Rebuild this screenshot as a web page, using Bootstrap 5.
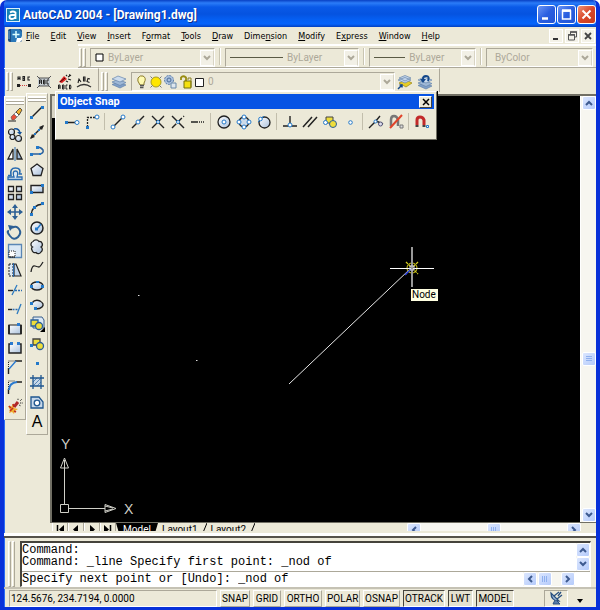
<!DOCTYPE html>
<html lang="en">
<head>
<meta charset="utf-8">
<meta name="viewport" content="width=device-width, initial-scale=1">
<title>AutoCAD 2004 - [Drawing1.dwg]</title>
<link href="https://cdn.jsdelivr.net/npm/bootstrap@5.3.0/dist/css/bootstrap.min.css" rel="stylesheet">
<style>
  :root { --face:#ece9d8; --shade:#aca899; --ui:"DejaVu Sans Condensed","Noto Sans",sans-serif; --rb:Roboto,"Liberation Sans",sans-serif; }
  body { background:#fff; font:9px/12px var(--ui); color:#000; }
  button, select, input { font:inherit; color:inherit; border:0; padding:0; margin:0; background:none; }
  svg { display:block; flex:none; }
  .app { height:100vh; min-height:560px; background:var(--face); border:solid #0831d9; border-width:0 4px 3px; border-radius:7px 7px 0 0; overflow:hidden; box-shadow:inset 1px 0 #2a6cf5; }
  .titlebar { height:27px; margin:0 -4px; padding:2px 4px 0 6px; background:linear-gradient(#0840c4 0,#2b7cf8 3px,#0a5ae8 7px,#0553e0 14px,#0560f4 20px,#0664fb 24px,#0340c0 27px); }
  .titlebar h1 { font:bold 12px/16px var(--rb); color:#fff; text-shadow:1px 1px #0a2f8f; margin:1px 0 0 3px; }
  .winbtns { gap:1px; }
  .winbtn { width:19px; height:19px; border:1px solid #fff; border-radius:3px; background:linear-gradient(135deg,#6d96f5,#2a5fe0 50%,#2255d6); }
  .winbtn.close-app { background:linear-gradient(135deg,#ee9478,#d9482a 50%,#c93c1c); }
  .menubar { height:17px; padding:0 1px 0 4px; }
  .menubar a { color:#000; text-decoration:none; margin-right:11px; }
  .menubar u { text-underline-offset:1px; }
  .mdis { gap:2px; }
  .mdi { width:14px; height:14px; background:#f4f2e8; border:1px solid #fff; }
  .bar { border-top:1px solid #fff; border-bottom:1px solid var(--shade); }
  .props { height:24px; margin-left:74px; padding:2px 3px 0 0; border-top-width:2px; gap:3px; }
  .grip { width:3px; background:var(--face); border:1px solid; border-color:#fff var(--shade) var(--shade) #fff; flex:none; }
  .grips { display:flex; gap:1px; height:19px; padding:0 1px; }
  .combo { height:19px; border:1px solid; border-color:var(--shade) #fff #fff var(--shade); color:#aca899; font:10px/14px var(--rb); min-width:0; }
  .combo select { appearance:none; opacity:1; color:#aca899; min-width:0; flex:1 1 0; width:0; }
  .drop { width:14px; height:16px; background:#f2f0e6; border:1px solid #fff; border-right-color:#d8d4c4; flex:none; display:flex; align-items:center; justify-content:center; }
  .div-v { width:2px; height:17px; border-left:1px solid #c9c5b2; border-right:1px solid #fff; }
  .c-a { flex:130 1 0; } .c-b { flex:140 1 0; } .c-c { flex:110 1 0; } .c-d { flex:106 1 0; }
  .row3 { height:26px; }
  .row3 > div { border-right:1px solid var(--shade); border-top:1px solid #fff; height:24px; padding:2px 4px 0 1px; }
  .tool { display:flex; align-items:center; justify-content:center; width:20px; height:18px; flex:none; }
  .tool svg { overflow:visible; }
  .layer-btn { margin-right:2px; }
  .layers { width:264px; }
  .dock { display:flex; flex-direction:column; align-items:center; justify-content:space-between; width:22px; border:1px solid; border-color:#fff var(--shade) var(--shade) #fff; padding:2px 0 4px; }
  .dock .tool { height:18px; }
  .dock .grip-h { width:18px; height:6px; border-top:2px solid #fff; border-bottom:1px solid var(--shade); box-shadow:inset 0 1px var(--shade),inset 0 -2px #fff; flex:none; }
  .docks { padding-right:2px; }
  .dock-modify { height:324px; margin-top:2px; }
  .dock-draw { height:342px; margin-top:-1px; }
  .view { background:#000; border-left:2px solid #716f64; min-width:0; }
  .canvas-svg { position:absolute; inset:0; width:100%; height:100%; }
  .ucs { position:absolute; left:6px; bottom:4px; }
  .snap-tip { position:absolute; left:358px; top:192px; background:#ffffe1; border:1px solid #000; font:10px/12px var(--rb); padding:0 2px 0 1px; }
  .sb { background:#f7f6f0; flex:none; display:flex; }
  .sbb { width:14px; height:14px; border:1px solid #fff; border-radius:2px; background:linear-gradient(135deg,#dbe6fe,#b5cbfb); display:flex; align-items:center; justify-content:center; flex:none; color:#3d5a90; }
  .vs { width:16px; flex-direction:column; align-items:center; border-left:1px solid #fff; }
  .track-a { flex:63 1 0; } .track-b { flex:37 1 0; }
  .hs { width:32%; margin-right:15px; }
  .edge { border-top:2px solid #716f64; }
  .tabs { height:9px; border-top:1px solid #716f64; overflow:hidden; align-items:flex-start; padding-left:2px; }
  .tabs button { line-height:12px; font-family:var(--rb); font-size:10px; }
  .tabs > button { height:14px; padding-top:0; }
  .tabs .nv { width:16px; border-right:1px solid var(--shade); border-left:1px solid #fff; display:flex; justify-content:center; padding-top:2px; }
  .tabs .model { background:#000; color:#fff; width:42px; clip-path:polygon(0 0,100% 0,90% 100%,10% 100%); }
  .command { margin-top:5px; border-top:2px solid #55524a; padding:3px 5px 0 3px; box-shadow:0 -3px #fff; }
  .cmdbox { border:1px solid #fff; border-top:2px solid #45433c; border-left:2px solid #45433c; background:#fff; font:12px/12px "Liberation Mono",monospace; }
  .cmdbox pre { font:inherit; margin:0; padding:1px 0 2px; overflow:hidden; line-height:12px; height:27px; }
  .cmdline { border-top:1px solid var(--shade); height:15px; }
  .cmdline label, .cmdline input { line-height:14px; }
  .cmdscroll { margin-right:15px; gap:1px; }
  .status { height:20px; border-top:2px solid #c5c2b4; padding:0 4px 0 5px; font:10px/15px var(--rb); gap:3px; }
  .coords { width:208px; height:17px; border:1px solid; border-color:var(--shade) #fff #fff var(--shade); padding-left:1px; }
  .st { height:17px; border:1px solid; border-color:#fff var(--shade) var(--shade) #fff; padding:0 1px; line-height:15px; text-align:center; white-space:nowrap; }
  .st.on { border-color:#45433c #fff #fff #45433c; background:#e4e1d0; }
  .w1 { width:30px; } .w2 { width:28px; } .w3 { width:38px; } .w4 { width:35px; } .w5 { width:37px; } .w6 { width:42px; } .w7 { width:25px; } .w8 { width:38px; }
  /* floating toolbar over the drawing */
  .osnap { position:absolute; left:51px; top:91px; width:382px; background:var(--face); border:1px solid; border-color:#fff #716f64 #716f64 #fff; box-shadow:1px 0 #000; padding:2px; z-index:5; }
  .osnap h2 { font:bold 11px/14px var(--rb); color:#fff; margin:0; }
  .cap { background:#0653e4; height:15px; padding:0 2px; }
  .cap button { width:13px; height:12px; background:var(--face); border:1px solid; border-color:#fff #45433c #45433c #fff; display:flex; align-items:center; justify-content:center; }
  .otools { padding:2px 0 5px 4px; height:28px; align-items:center; }
  .osep { width:6px; height:17px; flex:none; background:linear-gradient(90deg,transparent 2px,#c2beac 2px,#c2beac 3px,transparent 3px); }
</style>
<script src="https://cdn.jsdelivr.net/npm/bootstrap@5.3.0/dist/js/bootstrap.bundle.min.js"></script>
</head>
<body>
<svg width="0" height="0" class="position-absolute" aria-hidden="true">
  <defs>
    <symbol id="down" viewBox="0 0 8 6"><path d="M1 1l3 3 3-3" fill="none" stroke="currentColor" stroke-width="2"/></symbol>
    <symbol id="up" viewBox="0 0 8 6"><path d="M1 5l3-3 3 3" fill="none" stroke="currentColor" stroke-width="2"/></symbol>
    <symbol id="lt" viewBox="0 0 6 8"><path d="M5 1L2 4l3 3" fill="none" stroke="currentColor" stroke-width="2"/></symbol>
    <symbol id="rt" viewBox="0 0 6 8"><path d="M1 1l3 3-3 3" fill="none" stroke="currentColor" stroke-width="2"/></symbol>
    <symbol id="stack" viewBox="0 0 16 16"><g stroke="#6484ab" stroke-width=".7"><path d="M1 10.500l6-2.500 8 3-6 3z" fill="#7f9fc8"/><path d="M1 8l6-2.500 8 3-6 3z" fill="#9fb8d6"/><path d="M1 5l6-3 8 3-6 3z" fill="#cbdbed"/></g></symbol>
    <linearGradient id="ball" x1="0" y1="0" x2="1" y2="1"><stop offset="0" stop-color="#fff"/><stop offset="1" stop-color="#a9c0dc"/></linearGradient>
  </defs>
</svg>

<div class="app d-flex flex-column position-relative">
  <header class="titlebar d-flex align-items-center flex-shrink-0">
    <svg width="14" height="14" viewBox="0 0 14 14"><rect x=".5" y=".5" width="13" height="13" fill="#1782b4" stroke="#d9f0fa"/><path d="M4 4.500Q7 2.500 9.500 4.500V11M9.500 7H6Q3.500 7 3.500 9T6 11Q8 11 9.500 9" fill="none" stroke="#fff" stroke-width="1.800"/></svg>
    <h1 class="flex-grow-1">AutoCAD 2004 - [Drawing1.dwg]</h1>
    <div class="winbtns d-flex">
      <button class="winbtn" aria-label="Minimize"><svg width="17" height="17" viewBox="0 0 17 17"><path d="M4 12.500h6" stroke="#fff" stroke-width="2.500"/></svg></button>
      <button class="winbtn" aria-label="Maximize"><svg width="17" height="17" viewBox="0 0 17 17"><path d="M4.500 5v8h8V5z" fill="none" stroke="#fff" stroke-width="1.500"/><path d="M4 4.500h9" stroke="#fff" stroke-width="2.500"/></svg></button>
      <button class="winbtn close-app" aria-label="Close"><svg width="17" height="17" viewBox="0 0 17 17"><path d="M4.500 4.500l8 8M12.500 4.500l-8 8" stroke="#fff" stroke-width="2"/></svg></button>
    </div>
  </header>

  <nav class="menubar d-flex align-items-center flex-shrink-0" aria-label="Menu">
    <svg class="me-1" width="14" height="13" viewBox="0 0 14 13"><rect width="14" height="13" rx="2" fill="#1a4d86"/><path d="M3 0h8l3 3v6l-4 4H3z" fill="#2a78b8"/><path d="M8 2v7M4.500 5.500h7" stroke="#dff" stroke-width="1.500"/><path d="M8 13l1-4h4l1-2v4l-2 2z" fill="#fff"/><path d="M1 2v8" stroke="#6fa9d8"/></svg>
    <a href="#"><u>F</u>ile</a><a href="#"><u>E</u>dit</a><a href="#"><u>V</u>iew</a><a href="#"><u>I</u>nsert</a><a href="#">F<u>o</u>rmat</a><a href="#"><u>T</u>ools</a><a href="#"><u>D</u>raw</a><a href="#">Dime<u>n</u>sion</a><a href="#"><u>M</u>odify</a><a href="#">E<u>x</u>press</a><a href="#"><u>W</u>indow</a><a href="#"><u>H</u>elp</a>
    <div class="mdis d-flex ms-auto">
      <button class="mdi" aria-label="Minimize drawing"><svg width="12" height="12" viewBox="0 0 12 12"><path d="M3 9h5" stroke="#333" stroke-width="2"/></svg></button>
      <button class="mdi" aria-label="Restore drawing"><svg width="12" height="12" viewBox="0 0 12 12"><path d="M4.500 4V2h6v5h-2M2.500 4.500h6V10h-6z" fill="none" stroke="#555"/><path d="M4 2h7M2 5h7" stroke="#555" stroke-width="1.500"/></svg></button>
      <button class="mdi" aria-label="Close drawing"><svg width="12" height="12" viewBox="0 0 12 12"><path d="M3 3l6 6M9 3l-6 6" stroke="#444" stroke-width="1.800"/></svg></button>
    </div>
  </nav>

  <div class="props bar d-flex flex-shrink-0">
    <div class="grips"><span class="grip"></span><span class="grip"></span></div>
    <div class="d-flex flex-grow-1 gap-1">
      <div class="combo c-a d-flex align-items-center ps-1"><svg class="me-1" width="9" height="9"><path d="M1 1h7v7H1z" fill="#fff" stroke="#000"/></svg><select disabled aria-label="Color"><option>ByLayer</option></select><span class="drop"><svg width="8" height="6"><use href="#down"/></svg></span></div>
      <span class="div-v"></span>
      <div class="combo c-b d-flex align-items-center ps-1"><svg class="me-1" width="53" height="3"><path d="M0 1.500h53" stroke="#5a5a44"/></svg><select disabled aria-label="Linetype"><option>ByLayer</option></select><span class="drop"><svg width="8" height="6"><use href="#down"/></svg></span></div>
      <span class="div-v"></span>
      <div class="combo c-c d-flex align-items-center ps-1"><svg class="me-1" width="31" height="3"><path d="M0 1.500h31" stroke="#5a5a44"/></svg><select disabled aria-label="Lineweight"><option>ByLayer</option></select><span class="drop"><svg width="8" height="6"><use href="#down"/></svg></span></div>
      <span class="div-v"></span>
      <div class="combo c-d d-flex align-items-center ps-2"><select disabled aria-label="Plot style"><option>ByColor</option></select><span class="drop"><svg width="8" height="6"><use href="#down"/></svg></span></div>
    </div>
  </div>

  <div class="row3 d-flex align-items-start flex-shrink-0">
    <div class="d-flex align-items-center">
      <div class="grips"><span class="grip"></span><span class="grip"></span></div>
      <button class="tool" aria-label="Text fit"><svg width="16" height="16" viewBox="0 0 16 16"><path d="M2 6V3h2v3M2 4.500h2M7 2.500h1.500v4H7zM7 4.500h2M14 3h-2v3h2" fill="none" stroke="#222" stroke-width="1.100"/><path d="M4 11.500h8" stroke="#c44" stroke-dasharray="1 1"/><path d="M1 10h3v3H1zM12 10h3v3h-3z" fill="#222"/></svg></button>
      <button class="tool" aria-label="Text mask"><svg width="16" height="16" viewBox="0 0 16 16"><path d="M2 4h12v8H2z" fill="#c9d0d4"/><path d="M1 2l3 3M15 2l-3 3M1 14l3-3M15 14l-3-3M3 4h10M3 12h10" stroke="#555"/><path d="M3.500 10V6h2v4M3.500 8h2M7.500 6h1.500v4H7.500zM7.500 8H9M13 6h-2v4h2" fill="none" stroke="#222"/></svg></button>
      <button class="tool" aria-label="Explode text"><svg width="16" height="16" viewBox="0 0 16 16"><path d="M3 8l5-6 3 3-5 4z" fill="#d22"/><path d="M4 8l5-4" stroke="#400"/><path d="M10 2l1-1M12 3l3-2M12 5l3 1M10 7l2 1M13 1h1" stroke="#222" stroke-width="1.300"/><path d="M2.500 15v-4h1.500v4M2.500 13h2M6.500 11h1.500v4H6.500zM6.500 13H8M11.500 11H10v4h1.500M13.500 11h1l.5 2-.5 2h-1z" fill="none" stroke="#222"/></svg></button>
      <button class="tool" aria-label="Arc-aligned text"><svg width="16" height="16" viewBox="0 0 16 16"><path d="M1 13q7-5 14 0" fill="none" stroke="#333" stroke-width="1.300"/><path d="M2 9l1-4 2 3M2 7l2-1M7.500 3H9v4H7.500zM7.500 5H9M14 5l-2-.5-1 3 2.500 1" fill="none" stroke="#222" stroke-width="1.100"/></svg></button>
    </div>
    <div class="d-flex align-items-center">
      <div class="grips"><span class="grip"></span><span class="grip"></span></div>
      <button class="tool layer-btn" aria-label="Layer properties"><svg width="16" height="16"><use href="#stack"/></svg></button>
      <div class="combo layers d-flex align-items-center ps-1">
        <svg width="72" height="16" viewBox="0 0 72 16"><path d="M3.500 10Q1 7 2 4q2-3 5-2 4 2 1 7v2H4z" fill="#fffbb0" stroke="#8a7a2a"/><path d="M4 11.500h4M4 13.500h3.500" stroke="#555" stroke-width="1.300"/><circle cx="20" cy="8" r="5" fill="#ffe600" stroke="#a99b20"/><path d="M14.500 2.500l2 2M23.500 4.500l2-2M14.500 13.500l2-2M23.500 11.500l2 2" stroke="#777"/><circle cx="33" cy="6" r="4.500" fill="#a9bfdc" stroke="#5a7ca8" stroke-dasharray="2 1"/><circle cx="33" cy="6" r="2" fill="none" stroke="#4a6c98"/><path d="M35 9h5v5h-5z" fill="#dde6ee" stroke="#6888a8"/><path d="M45 6V3.500Q47 1 50 3.500V8" fill="none" stroke="#998c10" stroke-width="1.800"/><path d="M48 7h7v7h-7z" fill="#f4e010" stroke="#75700d"/><path d="M52 6V4h3v9" fill="none" stroke="#8a8020"/><path d="M59.500 4.500h8v8h-8z" fill="#fff" stroke="#222"/></svg>
        <select disabled aria-label="Layer"><option>0</option></select><span class="drop"><svg width="8" height="6"><use href="#down"/></svg></span>
      </div>
      <button class="tool" aria-label="Make object's layer current"><svg width="16" height="16" viewBox="0 0 16 16"><path d="M2 9l7-3 6 3-6 4z" fill="#e6cd25" stroke="#9a8414" stroke-width=".7"/><path d="M1 6l7-2.500L14 6 8 9zM2 4l6-2.500L14 4 8 7z" fill="#c4d5ea" stroke="#6484ab" stroke-width=".7"/><path d="M1 15l4-4M2.500 11H5v2.500" fill="none" stroke="#14478a" stroke-width="1.500"/></svg></button>
      <button class="tool" aria-label="Layer previous"><svg width="16" height="16" viewBox="0 0 16 16"><use href="#stack" width="16" height="16" y="1"/><path d="M11 7Q13 2 9 2 6 2 6 5" fill="none" stroke="#14478a" stroke-width="2"/><path d="M3 5h6L6 9z" fill="#14478a"/></svg></button>
    </div>
  </div>

  <main class="d-flex flex-grow-1">
    <div class="docks d-flex align-items-start flex-shrink-0">
      <div class="dock dock-modify" role="toolbar" aria-label="Modify">
        <span class="grip-h"></span>
        <button class="tool" aria-label="Erase"><svg width="16" height="16" viewBox="0 0 16 16"><path d="M1 14h8" stroke="#222"/><path d="M4 10l3-3 3 3-3 3H5z" fill="#e8503a" stroke="#555" stroke-width=".6"/><path d="M7 7l2-2 3 3-2 2z" fill="#fff" stroke="#555" stroke-width=".6"/><path d="M9 5l4-4 2 2-3 5z" fill="#f0b030" stroke="#333" stroke-width=".8"/></svg></button>
        <button class="tool" aria-label="Copy"><svg width="16" height="16" viewBox="0 0 16 16"><g fill="url(#ball)" stroke="#222" stroke-width="1.200"><circle cx="4.500" cy="5" r="3"/><circle cx="5.500" cy="10" r="2.500"/><circle cx="11.500" cy="11.500" r="3"/></g><path d="M7 2q5-1 6 4" fill="none" stroke="#14539c" stroke-width="1.500"/><path d="M10 5h5l-2 3z" fill="#14539c"/></svg></button>
        <button class="tool" aria-label="Mirror"><svg width="16" height="16" viewBox="0 0 16 16"><path d="M6 3v10H1z" fill="#fff" stroke="#222" stroke-width="1.300"/><path d="M10 3v10h5z" fill="#9eb8d6" stroke="#222" stroke-width="1.300"/><path d="M8 1v14" stroke="#2a6bb0"/></svg></button>
        <button class="tool" aria-label="Offset"><svg width="16" height="16" viewBox="0 0 16 16"><path d="M1 9.500h3Q2.500 2 8.500 2T12.500 8H15" fill="none" stroke="#2a6bb0" stroke-width="1.600"/><path d="M1 13.500V11h6Q5 5 8.500 5T10 11h5v2.500z" fill="#dbe8f5" stroke="#2a6bb0" stroke-width="1.300"/></svg></button>
        <button class="tool" aria-label="Array"><svg width="16" height="16" viewBox="0 0 16 16"><g fill="url(#ball)" stroke="#222" stroke-width="1.300"><path d="M1.500 1.500h5v5h-5zM9.500 1.500h5v5h-5zM1.500 9.500h5v5h-5zM9.500 9.500h5v5h-5z"/></g></svg></button>
        <button class="tool" aria-label="Move"><svg width="16" height="16" viewBox="0 0 16 16"><path d="M8 2v12M2 8h12" stroke="#2c5f94" stroke-width="1.600"/><path d="M8 0l3 4H5zM8 16l3-4H5zM0 8l4-3v6zM16 8l-4-3v6z" fill="#2c5f94"/></svg></button>
        <button class="tool" aria-label="Rotate"><svg width="16" height="16" viewBox="0 0 16 16"><path d="M5 4Q9 1 12 5t-1 8-8-1-1-5" fill="none" stroke="#2c5f94" stroke-width="2"/><path d="M1 1l6 1-4 5z" fill="#2c5f94"/></svg></button>
        <button class="tool" aria-label="Scale"><svg width="16" height="16" viewBox="0 0 16 16"><path d="M1.500 1.500h13v13h-13z" fill="#dbe8f5" stroke="#5a86b5" stroke-width="1.300"/><path d="M2 8h6v6H2z" fill="#fff" stroke="#222" stroke-dasharray="1 1"/><path d="M2 14h6" stroke="#222"/></svg></button>
        <button class="tool" aria-label="Stretch"><svg width="16" height="16" viewBox="0 0 16 16"><path d="M2 2h4v12H2z" fill="#dbe8f5" stroke="#222" stroke-dasharray="2 1"/><path d="M7 2h2l5 12H7z" fill="#c4d6ea" stroke="#222" stroke-width="1.200"/><path d="M6.500 1v14" stroke="#2a6bb0"/></svg></button>
        <button class="tool" aria-label="Trim"><svg width="16" height="16" viewBox="0 0 16 16"><path d="M1 8.500h5" stroke="#222" stroke-width="1.400"/><path d="M8 8.500h7" stroke="#2a6bb0" stroke-width="1.400" stroke-dasharray="2 1"/><path d="M5 13l5-10" stroke="#2a7ac0" stroke-width="1.300"/></svg></button>
        <button class="tool" aria-label="Extend"><svg width="16" height="16" viewBox="0 0 16 16"><path d="M1 8.500h4" stroke="#222" stroke-width="1.400"/><path d="M5.500 8.500H11" stroke="#2a6bb0" stroke-width="1.400" stroke-dasharray="2 1"/><path d="M10 13l4-10" stroke="#2a7ac0" stroke-width="1.300"/></svg></button>
        <button class="tool" aria-label="Break at point"><svg width="16" height="16" viewBox="0 0 16 16"><path d="M2 4h12v9H2z" fill="url(#ball)" stroke="#222" stroke-width="1.200"/><path d="M2 4v9M14 4v9" stroke="#222" stroke-width="1.800"/><path d="M10 2h3v3h-3z" fill="#2a7ad0"/></svg></button>
        <button class="tool" aria-label="Break"><svg width="16" height="16" viewBox="0 0 16 16"><path d="M4 4H2v9h12V4h-2" fill="url(#ball)" stroke="#222" stroke-width="1.500"/><path d="M3 2h3v3H3zM10 2h3v3h-3z" fill="#2a7ad0"/></svg></button>
        <button class="tool" aria-label="Chamfer"><svg width="16" height="16" viewBox="0 0 16 16"><path d="M1.500 14V2H8" fill="none" stroke="#222" stroke-dasharray="1 1"/><path d="M1.500 9v6M8 2h7" stroke="#222" stroke-width="1.400"/><path d="M2 10l7-8" stroke="#2a7ad0" stroke-width="1.400"/></svg></button>
        <button class="tool" aria-label="Fillet"><svg width="16" height="16" viewBox="0 0 16 16"><path d="M1.500 14V2H8" fill="none" stroke="#222" stroke-dasharray="1 1"/><path d="M1.500 10v5M9 3h6" stroke="#222" stroke-width="1.400"/><path d="M2 11q0-7 8-8" fill="none" stroke="#2a7ad0" stroke-width="2"/></svg></button>
        <button class="tool" aria-label="Explode"><svg width="16" height="16" viewBox="0 0 16 16"><path d="M1 8l3 1 2-3 1 4 4 1-3 2-1 3-2-2-3 1 1-3z" fill="#f0b030"/><path d="M2 8l2 2M3 13l3-3M7 13l2 1M6 6l1 3" stroke="#c2301c" stroke-width="1.700"/><path d="M7 9l4-5" stroke="#b02828" stroke-width="3"/><path d="M11 2V0M13 3l2-2M13 5h3M12 7l2 1" stroke="#333" stroke-dasharray="1 .7"/></svg></button>
      </div>
      <div class="dock dock-draw" role="toolbar" aria-label="Draw">
        <span class="grip-h"></span>
        <button class="tool" aria-label="Line"><svg width="16" height="16" viewBox="0 0 16 16"><path d="M3 13L13 3" stroke="#222" stroke-width="1.400"/><path d="M1 12h3v3H1zM12 2h3v3h-3z" fill="#2379c9"/></svg></button>
        <button class="tool" aria-label="Construction line"><svg width="16" height="16" viewBox="0 0 16 16"><path d="M2 14L14 2" stroke="#222" stroke-width="1.500"/><path d="M1 15l2-5 3 3zM15 1l-5 2 3 3z" fill="#222"/><path d="M5 9h2v2H5zM9 5h2v2H9z" fill="#2379c9"/></svg></button>
        <button class="tool" aria-label="Polyline"><svg width="16" height="16" viewBox="0 0 16 16"><path d="M2 11h9q4-1 3-4-2-3-6-3" fill="none" stroke="#2a5f9a" stroke-width="1.500"/><path d="M1 10h3v3H1zM7 3h3v3H7zM10 10h2v2h-2z" fill="#2379c9"/></svg></button>
        <button class="tool" aria-label="Polygon"><svg width="16" height="16" viewBox="0 0 16 16"><path d="M8 2l6 4.500-2 7H4l-2-7z" fill="url(#ball)" stroke="#222" stroke-width="1.300"/></svg></button>
        <button class="tool" aria-label="Rectangle"><svg width="16" height="16" viewBox="0 0 16 16"><path d="M2 4.500h12v7H2z" fill="url(#ball)" stroke="#222" stroke-width="1.400"/><path d="M1 10h3v3H1zM12 3h3v3h-3z" fill="#2379c9"/></svg></button>
        <button class="tool" aria-label="Arc"><svg width="16" height="16" viewBox="0 0 16 16"><path d="M2 14Q3 4 14 3" fill="none" stroke="#222" stroke-width="1.400"/><path d="M1 12h3v3H1zM4 5h3v3H4zM12 1h3v3h-3z" fill="#2379c9"/></svg></button>
        <button class="tool" aria-label="Circle"><svg width="16" height="16" viewBox="0 0 16 16"><circle cx="8" cy="8" r="6" fill="url(#ball)" stroke="#222" stroke-width="1.500"/><path d="M8 9l4-5" stroke="#2379c9" stroke-width="1.400"/><path d="M6 7.500h3v3H6z" fill="#2379c9"/></svg></button>
        <button class="tool" aria-label="Revision cloud"><svg width="16" height="16" viewBox="0 0 16 16"><path d="M3.500 8A3 3 0 0 1 4 2.500a3.500 3.500 0 0 1 6 0A3 3 0 0 1 12 8a3 3 0 0 1 0 5 3 3 0 0 1-5 .5A3 3 0 0 1 3 11a2 2 0 0 1 .5-3z" fill="url(#ball)" stroke="#222" stroke-width="1.300"/></svg></button>
        <button class="tool" aria-label="Spline"><svg width="16" height="16" viewBox="0 0 16 16"><path d="M2 13q1-7 4-6t4 1 4-5" fill="none" stroke="#222" stroke-width="1.300"/></svg></button>
        <button class="tool" aria-label="Ellipse"><svg width="16" height="16" viewBox="0 0 16 16"><ellipse cx="8" cy="8" rx="6" ry="4" fill="url(#ball)" stroke="#222" stroke-width="1.400"/><path d="M1 7h3v3H1zM12 7h3v3h-3zM7 3h3v2H7z" fill="#2379c9"/></svg></button>
        <button class="tool" aria-label="Ellipse arc"><svg width="16" height="16" viewBox="0 0 16 16"><path d="M3 6q3-4 8-2 5 3 2 6-2 2-6 2" fill="url(#ball)" stroke="#222" stroke-width="1.400"/><path d="M1 5h3v3H1zM5 10h3v3H5z" fill="#2379c9"/></svg></button>
        <button class="tool" aria-label="Insert block"><svg width="16" height="16" viewBox="0 0 16 16"><path d="M4 1h9l2 3v8H4z" fill="#dbe8f5" stroke="#3a5f8a"/><path d="M2 4h7v6H2z" fill="#eedd3a" stroke="#2a5f9a" stroke-width="1.300"/><circle cx="10" cy="10" r="3.500" fill="#eedd3a" stroke="#2a5f9a" stroke-width="1.300"/><path d="M16 11v5h-5z" fill="#000"/></svg></button>
        <button class="tool" aria-label="Make block"><svg width="16" height="16" viewBox="0 0 16 16"><path d="M4 3h7v6H4z" fill="#eedd3a" stroke="#444" stroke-width="1.300"/><circle cx="11" cy="10" r="3.500" fill="#eedd3a" stroke="#2a5f9a" stroke-width="1.300"/><path d="M1 8h3v3H1z" fill="#2379c9"/></svg></button>
        <button class="tool" aria-label="Point"><svg width="16" height="16" viewBox="0 0 16 16"><path d="M7 7h3v3H7z" fill="#2379c9"/></svg></button>
        <button class="tool" aria-label="Hatch"><svg width="16" height="16" viewBox="0 0 16 16"><path d="M4 4h8v8H4z" fill="#c7d8e8"/><path d="M4 8l4-4M4 12l8-8M8 12l4-4" stroke="#5a86b5"/><path d="M4 1v14M12 1v14M1 4h14M1 12h14" stroke="#1f568f" stroke-width="1.300"/></svg></button>
        <button class="tool" aria-label="Region"><svg width="16" height="16" viewBox="0 0 16 16"><path d="M2 3h8l4 5v6H2z" fill="#c7d8ea" stroke="#1f568f" stroke-width="1.300"/><circle cx="8" cy="9" r="2.800" fill="#fff" stroke="#1f568f" stroke-width="1.300"/></svg></button>
        <button class="tool" aria-label="Multiline text"><svg width="16" height="18" viewBox="0 0 16 18"><text x="8" y="15" text-anchor="middle" font-family="Liberation Sans" font-size="16">A</text></svg></button>
      </div>
    </div>

    <div class="d-flex flex-column flex-grow-1 edge">
      <div class="d-flex flex-grow-1">
        <div class="view position-relative flex-grow-1">
          <svg class="canvas-svg">
            <path d="M0 0h3v22H0z" fill="#d8d4c4"/>
            <path d="M237 288L357 174" stroke="#e8e8e8"/>
            <path d="M86 199.500h1.500M144 264.500h1.500" stroke="#ddd"/>
            <g fill="none"><circle cx="360" cy="172" r="5" stroke="#d8d020"/><path d="M354 166l12 12M366 166l-12 12" stroke="#d8d020" stroke-width="1.300" stroke-dasharray="3 1"/><path d="M353 179l7-7" stroke="#2038e0" stroke-width="1.500"/><path d="M338 172.500h44" stroke="#fff"/><path d="M360 151v40" stroke="#999" stroke-width="2"/><path d="M358 170h4v4h-4z" stroke="#ccd"/></g>
          </svg>
          <svg class="ucs" width="80" height="84" viewBox="0 0 80 84"><g fill="none" stroke="#d0d0c8"><path d="M2.500 70.500h8v8h-8zM6.500 70V33M11 74.500h36M6.500 24l-4 10h8zM6.500 26v8M58 74.500l-11-4v8zM47 72l8 2M47 77l8-2"/></g><g fill="#d0d0c8" font-family="Liberation Sans" font-size="14"><text x="3" y="15">Y</text><text x="66" y="80">X</text></g></svg>
          <div class="snap-tip">Node</div>
        </div>
        <div class="sb vs">
          <button class="sbb" aria-label="Scroll up"><svg width="8" height="6"><use href="#up"/></svg></button>
          <span class="track-a"></span>
          <button class="sbb" aria-label="Vertical thumb"><svg width="8" height="8"><path d="M1 1.500h6M1 3.500h6M1 5.500h6" stroke="#8fb0ee"/></svg></button>
          <span class="track-b"></span>
          <button class="sbb" aria-label="Scroll down"><svg width="8" height="6"><use href="#down"/></svg></button>
        </div>
      </div>
      <div class="tabs d-flex flex-shrink-0">
        <button class="nv" aria-label="First"><svg width="8" height="9"><path d="M1.500 0v9" stroke="#000" stroke-width="1.500"/><path d="M8 0v9L3 4.500z"/></svg></button>
        <button class="nv" aria-label="Previous"><svg width="6" height="9"><path d="M5 0v9L0 4.500z"/></svg></button>
        <button class="nv" aria-label="Next"><svg width="6" height="9"><path d="M1 0v9l5-4.500z"/></svg></button>
        <button class="nv" aria-label="Last"><svg width="8" height="9"><path d="M6.500 0v9" stroke="#000" stroke-width="1.500"/><path d="M0 0v9l5-4.500z"/></svg></button>
        <button class="model">Model</button><button class="ms-1">Layout1</button><svg class="mx-1" width="5" height="12"><path d="M5 0L0 12" stroke="#000"/></svg><button>Layout2</button><svg class="mx-1" width="5" height="12"><path d="M5 0L0 12" stroke="#000"/></svg>
        <div class="sb hs ms-auto justify-content-between">
          <button class="sbb" aria-label="Scroll left"><svg width="6" height="8"><use href="#lt"/></svg></button>
          <button class="sbb" aria-label="Horizontal thumb"><svg width="8" height="8"><path d="M1.500 1v6M3.500 1v6M5.500 1v6" stroke="#8fb0ee"/></svg></button>
          <button class="sbb" aria-label="Scroll right"><svg width="6" height="8"><use href="#rt"/></svg></button>
        </div>
      </div>
    </div>
  </main>

  <section class="command d-flex flex-shrink-0" aria-label="Command window">
    <div class="grips h-auto me-1"><span class="grip"></span><span class="grip"></span></div>
    <div class="cmdbox flex-grow-1">
      <div class="d-flex">
        <pre class="flex-grow-1">Command:
Command: _line Specify first point: _nod of</pre>
        <div class="sb flex-column">
          <button class="sbb" aria-label="History up"><svg width="8" height="6"><use href="#up"/></svg></button>
          <button class="sbb" aria-label="History down"><svg width="8" height="6"><use href="#down"/></svg></button>
        </div>
      </div>
      <div class="cmdline d-flex">
        <label for="cmd" class="text-nowrap">Specify next point or [Undo]:&nbsp;</label><input id="cmd" class="flex-grow-1" value="_nod of">
        <div class="sb cmdscroll">
          <button class="sbb" aria-label="Command left"><svg width="6" height="8"><use href="#lt"/></svg></button>
          <button class="sbb me-2" aria-label="Command thumb"><svg width="8" height="8"><path d="M1.500 1v6M3.500 1v6M5.500 1v6" stroke="#8fb0ee"/></svg></button>
          <button class="sbb" aria-label="Command right"><svg width="6" height="8"><use href="#rt"/></svg></button>
        </div>
      </div>
    </div>
  </section>

  <footer class="status d-flex align-items-center flex-shrink-0">
    <output class="coords">124.5676, 234.7194, 0.0000</output>
    <button class="st w1">SNAP</button><button class="st w2">GRID</button><button class="st w3">ORTHO</button><button class="st w4">POLAR</button><button class="st w5">OSNAP</button><button class="st w6 on">OTRACK</button><button class="st w7 on">LWT</button><button class="st w8 on">MODEL</button>
    <div class="d-flex align-items-center ms-auto gap-2 me-2">
      <button class="coords w-auto px-1" aria-label="Communication center"><svg width="14" height="14" viewBox="0 0 14 14"><path d="M2 2q0 8 8 8L2 2z" fill="#9db6d4" stroke="#2a5080" stroke-width="1.300"/><path d="M5 5l5-4M9 5l3-4M8 8l5-4" stroke="#2a5080" stroke-width="1.300"/><path d="M6 9l-2 4h7L8 10" fill="#5a7ca8" stroke="#2a5080"/></svg></button>
      <button aria-label="Status bar menu"><svg width="8" height="12"><path d="M1 7h6l-3 4z"/></svg></button>
    </div>
  </footer>

  <section class="osnap" aria-label="Object Snap toolbar">
    <div class="cap d-flex align-items-center"><h2 class="flex-grow-1">Object Snap</h2><button aria-label="Close toolbar"><svg width="8" height="8"><path d="M1 1l6 6M7 1L1 7" stroke="#000" stroke-width="1.500"/></svg></button></div>
    <div class="otools d-flex">
      <button class="tool" aria-label="Temporary track point"><svg width="16" height="16" viewBox="0 0 16 16"><path d="M3 8.500h8" stroke="#222" stroke-width="1.300"/><path d="M1 7h3v3H1z" fill="#2379c9"/><circle cx="13" cy="8.500" r="2" fill="#fff" stroke="#2379c9"/></svg></button>
      <button class="tool" aria-label="Snap from"><svg width="16" height="16" viewBox="0 0 16 16"><path d="M3.500 13V3.500H12" fill="none" stroke="#222" stroke-width="1.300" stroke-dasharray="2 1"/><path d="M2 12h3v3H2z" fill="#2379c9"/><circle cx="13" cy="3" r="2" fill="#fff" stroke="#2379c9"/></svg></button>
      <span class="osep"></span>
      <button class="tool" aria-label="Endpoint"><svg width="16" height="16" viewBox="0 0 16 16"><path d="M3 13L13 3" stroke="#222" stroke-width="1.400"/><g fill="#fff" stroke="#2379c9"><circle cx="3" cy="13" r="2"/><circle cx="13" cy="3" r="2"/></g></svg></button>
      <button class="tool" aria-label="Midpoint"><svg width="16" height="16" viewBox="0 0 16 16"><path d="M2 14L14 2" stroke="#222" stroke-width="1.400"/><circle cx="8" cy="8" r="2" fill="#fff" stroke="#2379c9"/></svg></button>
      <button class="tool" aria-label="Intersection"><svg width="16" height="16" viewBox="0 0 16 16"><path d="M2 14L14 2M2 2l12 12" stroke="#222" stroke-width="1.400"/><circle cx="8" cy="8" r="1.500" fill="#fff" stroke="#2379c9"/></svg></button>
      <button class="tool" aria-label="Apparent intersection"><svg width="16" height="16" viewBox="0 0 16 16"><path d="M2 14L14 2" stroke="#222" stroke-width="1.400" stroke-dasharray="6 2"/><path d="M2 2l12 12" stroke="#222" stroke-width="1.400"/><circle cx="8" cy="8" r="1.500" fill="#fff" stroke="#2379c9"/></svg></button>
      <button class="tool" aria-label="Extension"><svg width="16" height="16" viewBox="0 0 16 16"><path d="M1 8h7" stroke="#222" stroke-width="1.400"/><path d="M9 8h6" stroke="#222" stroke-width="1.400" stroke-dasharray="1 1"/></svg></button>
      <span class="osep"></span>
      <button class="tool" aria-label="Center"><svg width="16" height="16" viewBox="0 0 16 16"><circle cx="8" cy="8" r="6" fill="url(#ball)" stroke="#222" stroke-width="1.300"/><circle cx="8" cy="8" r="2" fill="#fff" stroke="#2379c9"/></svg></button>
      <button class="tool" aria-label="Quadrant"><svg width="16" height="16" viewBox="0 0 16 16"><circle cx="8" cy="8" r="5" fill="#cddbe9" stroke="#222" stroke-width="1.300"/><g fill="#fff" stroke="#2379c9"><circle cx="8" cy="3" r="2"/><circle cx="8" cy="13" r="2"/><circle cx="3" cy="8" r="2"/><circle cx="13" cy="8" r="2"/></g></svg></button>
      <button class="tool" aria-label="Tangent"><svg width="16" height="16" viewBox="0 0 16 16"><circle cx="8.500" cy="8.500" r="5.500" fill="url(#ball)" stroke="#222" stroke-width="1.300"/><path d="M2 8l6-6" stroke="#2379c9"/><circle cx="4.500" cy="5" r="1.800" fill="#fff" stroke="#2379c9"/></svg></button>
      <span class="osep"></span>
      <button class="tool" aria-label="Perpendicular"><svg width="16" height="16" viewBox="0 0 16 16"><path d="M8 2v8M1 12h14" stroke="#222" stroke-width="1.400"/><circle cx="8" cy="11" r="2" fill="#fff" stroke="#2379c9"/></svg></button>
      <button class="tool" aria-label="Parallel"><svg width="16" height="16" viewBox="0 0 16 16"><path d="M1 13L10 3M6 13l9-10" stroke="#222" stroke-width="1.500"/></svg></button>
      <button class="tool" aria-label="Insert"><svg width="16" height="16" viewBox="0 0 16 16"><path d="M4 3h7v6H4z" fill="#eedd3a" stroke="#444"/><circle cx="11" cy="10" r="3.500" fill="#eedd3a" stroke="#2a5f9a"/><circle cx="3.500" cy="8.500" r="2" fill="#fff" stroke="#2379c9"/></svg></button>
      <button class="tool" aria-label="Node"><svg width="16" height="16" viewBox="0 0 16 16"><circle cx="8.500" cy="8.500" r="1.800" fill="#fff" stroke="#2379c9"/></svg></button>
      <span class="osep"></span>
      <button class="tool" aria-label="Nearest"><svg width="16" height="16" viewBox="0 0 16 16"><path d="M1 14L7 8 12 2M8 7l7 3" fill="none" stroke="#222" stroke-width="1.400"/><circle cx="7.500" cy="7.500" r="1.500" fill="#fff" stroke="#2379c9"/><circle cx="12.500" cy="10" r="2" fill="#dde" stroke="#557"/></svg></button>
      <button class="tool" aria-label="Snap none"><svg width="16" height="16" viewBox="0 0 16 16"><path d="M3 12V6q0-4 3-4t4 4v6" fill="none" stroke="#777" stroke-width="2.500"/><path d="M2 14L14 1" stroke="#e0442a" stroke-width="2"/><path d="M12 11h3v3h-3z" fill="#ddd" stroke="#777"/></svg></button>
      <span class="osep"></span>
      <button class="tool" aria-label="Object snap settings"><svg width="16" height="16" viewBox="0 0 16 16"><path d="M3 11V6q0-3 3-3t4 3v5" fill="none" stroke="#c22a2a" stroke-width="3"/><path d="M1.500 12h3M8.500 12h3" stroke="#444" stroke-width="2"/><path d="M12.500 11.500h2v2h-2z" fill="#fff" stroke="#2379c9"/></svg></button>
    </div>
  </section>
</div>
</body>
</html>
